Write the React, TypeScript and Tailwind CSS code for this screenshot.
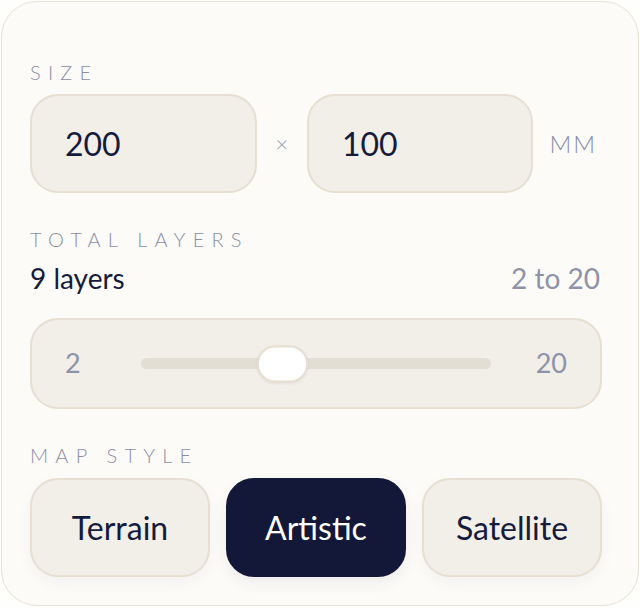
import React, { useState } from "react";

const FONT = "font-['Lato','Noto_Sans',sans-serif]";

const STYLES = ["Terrain", "Artistic", "Satellite"] as const;

function SectionLabel({ children }: { children: React.ReactNode }) {
  return (
    <div className="h-5 text-[20px] leading-5 font-light tracking-[0.36em] text-[#8a8fa6] uppercase">
      {children}
    </div>
  );
}

function SizeField({ value, width }: { value: string; width: string }) {
  return (
    <div
      className={`${width} flex h-[99px] items-center rounded-[28px] border-2 border-[#e6dfd2] bg-[#f2eee8] pl-[33px] text-[32px] text-[#151b3c]`}
    >
      {value}
    </div>
  );
}

export default function App() {
  const [layers] = useState(9);
  const [mapStyle, setMapStyle] = useState<(typeof STYLES)[number]>("Artistic");

  const min = 2;
  const max = 20;
  const trackW = 350;
  const thumbW = 51;
  const thumbLeft = ((layers - min) / (max - min)) * (trackW - thumbW);

  return (
    <div className={`min-h-[608px] w-[640px] bg-[#fefefd] pt-px pl-px ${FONT}`}>
      <div className="flex h-[605px] w-[638px] flex-col rounded-[36px] border border-[#e8e2d7] bg-[#fcfbf8] pt-[60px] pl-[28px]">
        {/* Size */}
        <SectionLabel>Size</SectionLabel>
        <div className="mt-[12px] flex w-[572px] items-center">
          <SizeField value="200" width="w-[227px]" />
          <span className="w-[50px] text-center text-[22px] font-light text-[#8e93a9]">×</span>
          <SizeField value="100" width="w-[226px]" />
          <span className="ml-auto pr-[5px] text-[24px] font-light tracking-[0.08em] text-[#8a8fa6]">MM</span>
        </div>

        {/* Layers */}
        <div className="mt-[36px]">
          <SectionLabel>Total layers</SectionLabel>
        </div>
        <div className="mt-[16px] flex w-[572px] items-center justify-between text-[28px] leading-[27px]">
          <span className="text-[#151b3c]">{layers} layers</span>
          <span className="pr-[2px] text-[#8e93a9]">
            {min} to {max}
          </span>
        </div>
        <div className="mt-[26px] flex h-[91px] w-[572px] items-center rounded-[28px] border-2 border-[#e6dfd2] bg-[#f2eee8] px-[33px] text-[27px] text-[#8e93a9]">
          <span className="w-[76px]">{min}</span>
          <div className="relative h-[11px] w-[350px] rounded-full bg-[#e3ded3]">
            <div
              className="absolute top-1/2 h-[37px] w-[51px] -translate-y-1/2 rounded-[18px] border-2 border-[#e6dfd2] bg-white shadow-[0_1px_3px_rgba(20,27,60,0.08)]"
              style={{ left: thumbLeft }}
            />
          </div>
          <span className="flex-1 text-right">{max}</span>
        </div>

        {/* Map style */}
        <div className="mt-[36px]">
          <SectionLabel>Map style</SectionLabel>
        </div>
        <div className="mt-[13px] flex w-[572px] gap-[16px]">
          {STYLES.map((s) => {
            const active = s === mapStyle;
            return (
              <button
                key={s}
                type="button"
                onClick={() => setMapStyle(s)}
                className={
                  active
                    ? "flex h-[99px] w-[180px] items-center justify-center rounded-[28px] border-2 border-[#131838] bg-[#131838] text-[32px] text-white shadow-[0_6px_16px_rgba(19,24,56,0.06)]"
                    : "flex h-[99px] w-[180px] items-center justify-center rounded-[28px] border-2 border-[#e6dfd2] bg-[#f2eee8] text-[32px] text-[#151b3c] shadow-[0_6px_16px_rgba(19,24,56,0.04)]"
                }
              >
                {s}
              </button>
            );
          })}
        </div>
      </div>
    </div>
  );
}
